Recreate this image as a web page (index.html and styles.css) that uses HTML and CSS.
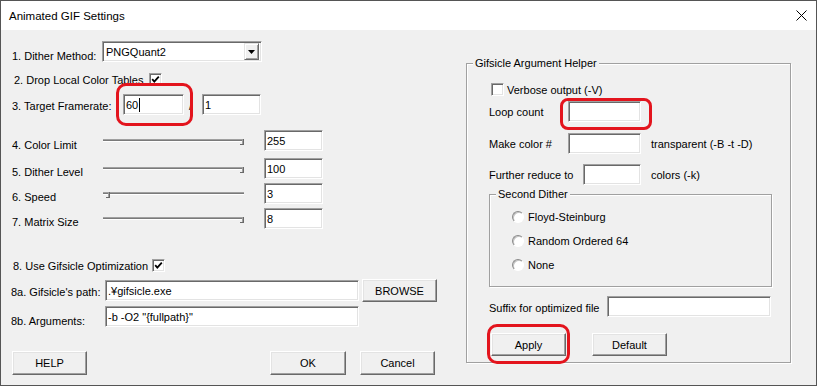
FILE: index.html
```html
<!DOCTYPE html>
<html>
<head>
	<meta charset="utf-8">
	<title>Animated GIF Settings</title>
	<link rel="stylesheet" href="styles.css">
</head>
<body>
<div class="window">
	<div class="titlebar">
		<span class="title">Animated GIF Settings</span>
		<svg class="close" width="11" height="11" viewBox="0 0 11 11"><path d="M0.5 0.5L10.5 10.5M10.5 0.5L0.5 10.5" stroke="#000" stroke-width="1" fill="none"/></svg>
	</div>
	<div class="dialog">
		<div class="left">
			<div class="row r1">
				<span class="lbl l-method down-4">1. Dither Method:</span>
				<div class="combo">
					<span class="combo-text">PNGQuant2</span>
					<span class="combo-btn"><svg width="7" height="4" viewBox="0 0 7 4"><path d="M0 0H7L3.5 4Z" fill="#000"/></svg></span>
				</div>
			</div>
			<div class="row r2">
				<span class="lbl l-drop">2. Drop Local Color Tables</span>
				<span class="check"><svg width="9" height="9" viewBox="0 0 9 9"><polyline points="1.2,4.2 3.3,6.6 7.8,1.6" stroke="#000" stroke-width="1.8" fill="none"/></svg></span>
			</div>
			<div class="row r3">
				<span class="lbl l-rate down-1">3. Target Framerate:</span>
				<div class="field f-rate">60<span class="caret"></span></div>
				<span class="sep">/</span>
				<div class="field f-rate2">1</div>
			</div>
			<div class="row r4">
				<span class="lbl l-slider down-4">4. Color Limit</span>
				<div class="slider"><span class="track"></span><span class="thumb at-end"></span></div>
				<div class="field f-num">255</div>
			</div>
			<div class="row r5">
				<span class="lbl l-slider down-3">5. Dither Level</span>
				<div class="slider"><span class="track"></span><span class="thumb at-end"></span></div>
				<div class="field f-num">100</div>
			</div>
			<div class="row r6">
				<span class="lbl l-slider down-3">6. Speed</span>
				<div class="slider"><span class="track"></span><span class="thumb" style="left:3px"></span></div>
				<div class="field f-num">3</div>
			</div>
			<div class="row r7">
				<span class="lbl l-slider down-3">7. Matrix Size</span>
				<div class="slider"><span class="track"></span><span class="thumb at-end"></span></div>
				<div class="field f-num">8</div>
			</div>
			<div class="row r8">
				<span class="lbl l-gifsicle">8. Use Gifsicle Optimization</span>
				<span class="check"><svg width="9" height="9" viewBox="0 0 9 9"><polyline points="1.2,4.2 3.3,6.6 7.8,1.6" stroke="#000" stroke-width="1.8" fill="none"/></svg></span>
			</div>
			<div class="row r8a">
				<span class="lbl l-path down-1">8a. Gifsicle's path:</span>
				<div class="field f-path">.¥gifsicle.exe</div>
				<button class="btn btn-browse">BROWSE</button>
			</div>
			<div class="row r8b">
				<span class="lbl l-path down-4">8b. Arguments:</span>
				<div class="field f-path">-b -O2 "{fullpath}"</div>
			</div>
			<div class="row r-btns">
				<button class="btn">HELP</button>
				<button class="btn btn-ok">OK</button>
				<button class="btn btn-cancel">Cancel</button>
			</div>
		</div>
		<div class="right">
			<div class="group">
				<span class="group-title">Gifsicle Argument Helper</span>
				<div class="row g-verbose">
					<span class="check"></span>
					<span class="lbl l-verbose">Verbose output (-V)</span>
				</div>
				<div class="row g-loop">
					<span class="lbl l-loop">Loop count</span>
					<div class="field f-loop"></div>
				</div>
				<div class="row g-color">
					<span class="lbl l-loop">Make color #</span>
					<div class="field f-loop"></div>
					<span class="lbl after">transparent (-B -t -D)</span>
				</div>
				<div class="row g-reduce">
					<span class="lbl l-reduce">Further reduce to</span>
					<div class="field f-reduce"></div>
					<span class="lbl after">colors (-k)</span>
				</div>
				<div class="sub">
					<span class="group-title">Second Dither</span>
					<div class="radio-row"><span class="radio"></span><span class="lbl">Floyd-Steinburg</span></div>
					<div class="radio-row"><span class="radio"></span><span class="lbl">Random Ordered 64</span></div>
					<div class="radio-row"><span class="radio"></span><span class="lbl">None</span></div>
				</div>
				<div class="row g-suffix">
					<span class="lbl l-suffix down-1">Suffix for optimized file</span>
					<div class="field f-suffix"></div>
				</div>
				<div class="row g-btns">
					<button class="btn btn-apply">Apply</button>
					<button class="btn btn-default">Default</button>
				</div>
			</div>
		</div>
	</div>

	<span class="mark mark-rate"></span>
	<span class="mark mark-loop"></span>
	<span class="mark mark-apply"></span>
</div>
</body>
</html>
```

FILE: styles.css
```css
body {
	margin: 0;
	font-family: "Liberation Sans", Arial, sans-serif;
	font-size: 11px;
	color: #000;
	background: #fff;
}

.window {
	position: relative;
	width: 817px;
	height: 386px;
	box-sizing: border-box;
	border: 1px solid #555555;
	background: #f0f0f0;
}

.titlebar {
	height: 29px;
	background: #ffffff;
	display: flex;
	align-items: center;
	padding: 0 9px 0 8px;
}

.title {
	flex: 1;
	font-size: 11.5px;
	padding-top: 1px;
}

.close {
	display: block;
}

.dialog {
	display: flex;
}

/* left column */
.left {
	width: 465px;
	box-sizing: border-box;
	padding-left: 11px;
}

.row {
	display: flex;
	align-items: center;
	height: 21px;
}

.lbl {
	flex: none;
	white-space: nowrap;
}

.down-1 {
	margin-top: 2px;
}

.down-3 {
	margin-top: 6px;
}

.down-4 {
	margin-top: 8px;
}

.r1 { margin-top: 11px; }
.r2 { margin-top: 7px; padding-left: 2px; }
.r3 { margin-top: 4px; }
.r4 { margin-top: 15px; }
.r5 { margin-top: 7px; }
.r6, .r7 { margin-top: 4px; }
.r8 { margin-top: 26px; padding-left: 1px; }
.r8a { margin-top: 3px; margin-left: -1px; height: 23px; }
.r8b { margin-top: 4px; margin-left: -1px; }
.r-btns { margin-top: 24px; height: 24px; }

.l-method { width: 90px; }
.l-drop { width: 135px; }
.l-rate { width: 111px; }
.l-slider { width: 91px; }
.l-gifsicle { width: 139px; }
.l-path { width: 94px; }

/* sunken controls */
.field,
.combo,
.check {
	box-sizing: border-box;
	background: #ffffff;
	border: 1px solid;
	border-color: #a0a0a0 #ffffff #ffffff #a0a0a0;
	box-shadow: inset 1px 1px #696969, inset -1px -1px #e3e3e3;
}

.field {
	flex: none;
	height: 21px;
	padding-left: 2px;
	display: flex;
	align-items: center;
	white-space: nowrap;
}

.f-rate { width: 61px; }
.f-rate2 { width: 59px; }
.f-num { width: 59px; margin-left: 20px; }
.f-path { width: 254px; }

.caret {
	display: inline-block;
	width: 1px;
	height: 14px;
	margin-left: 1px;
	background: #000;
}

.sep {
	width: 18px;
	box-sizing: border-box;
	padding-left: 5px;
	margin-top: 3px;
}

.combo {
	width: 160px;
	height: 21px;
	padding: 2px;
	display: flex;
	align-items: center;
}

.combo-text {
	flex: 1;
	padding-left: 1px;
}

.combo-btn {
	width: 15px;
	height: 17px;
	box-sizing: border-box;
	border: 1px solid;
	border-color: #e3e3e3 #696969 #696969 #e3e3e3;
	box-shadow: inset 1px 1px #ffffff, inset -1px -1px #a0a0a0;
	background: #f0f0f0;
	display: flex;
	align-items: center;
	justify-content: center;
}

.check {
	flex: none;
	width: 13px;
	height: 13px;
	display: flex;
	align-items: center;
	justify-content: center;
}

.check svg {
	display: block;
}

/* trackbar */
.slider {
	position: relative;
	width: 141px;
	height: 21px;
	display: flex;
	align-items: center;
}

.track {
	flex: 1;
	height: 1px;
	background: #7a7a7a;
	border-top: 1px solid #a0a0a0;
	border-bottom: 1px solid #ffffff;
}

.thumb {
	position: absolute;
	top: 9px;
	width: 3px;
	height: 5px;
	border-right: 1px solid #696969;
	border-bottom: 1px solid #696969;
	box-shadow: inset -1px 0 #a0a0a0;
}

.thumb.at-end {
	right: 0;
}

/* buttons */
.btn {
	flex: none;
	box-sizing: border-box;
	width: 75px;
	height: 24px;
	padding: 0;
	font: inherit;
	color: #000;
	background: #f0f0f0;
	border: 1px solid;
	border-color: #ffffff #696969 #696969 #ffffff;
	box-shadow: inset -1px -1px #a0a0a0, inset 1px 1px #e3e3e3;
}

.btn-browse { height: 23px; margin-left: 3px; }
.btn-ok { width: 76px; margin-left: 183px; }
.btn-cancel { margin-left: 14px; }

/* right column */
.right {
	padding-top: 33px;
}

.group,
.sub {
	position: relative;
	box-sizing: border-box;
	border: 1px solid #a0a0a0;
	box-shadow: inset 1px 1px #ffffff, 1px 1px #ffffff;
}

.group {
	width: 325px;
	height: 300px;
	padding-left: 22px;
}

.group-title {
	position: absolute;
	top: -7px;
	left: 6px;
	padding: 0 2px;
	line-height: 13px;
	background: #f0f0f0;
	white-space: nowrap;
}

.g-verbose { margin-top: 15px; padding-left: 2px; }
.g-loop { margin-top: 1px; }
.g-color { margin-top: 11px; }
.g-reduce { margin-top: 10px; }
.g-suffix { margin-top: 9px; }
.g-btns { margin-top: 16px; height: 23px; }

.l-verbose { margin-left: 3px; }
.l-loop { width: 79px; }
.l-reduce { width: 94px; }
.l-suffix { width: 118px; }

.f-loop { width: 73px; }
.f-reduce { width: 58px; }
.f-suffix { width: 164px; }

.after {
	margin-left: 10px;
}

.sub {
	margin-top: 9px;
	width: 283px;
	height: 93px;
	padding: 12px 0 0 22px;
}

.radio-row {
	display: flex;
	align-items: center;
	height: 20px;
	margin-bottom: 4px;
}

.radio {
	flex: none;
	width: 12px;
	height: 12px;
	box-sizing: border-box;
	margin-right: 4px;
	border-radius: 50%;
	background: #ffffff;
	border: 1px solid;
	border-color: #8a8a8a #ffffff #ffffff #8a8a8a;
	box-shadow: inset 1px 1px #c4c4c4;
}

.btn-apply { height: 23px; margin-left: 2px; }
.btn-default { height: 23px; margin-left: 26px; }

/* red annotation marks */
.mark {
	position: absolute;
	box-sizing: border-box;
	border: 3px solid #e3141d;
	border-radius: 10px;
}

.mark-rate {
	left: 115px;
	top: 82px;
	width: 77px;
	height: 43px;
}

.mark-loop {
	left: 559px;
	top: 97px;
	width: 92px;
	height: 32px;
	border-radius: 8px;
}

.mark-apply {
	left: 486px;
	top: 323px;
	width: 83px;
	height: 40px;
}
```
